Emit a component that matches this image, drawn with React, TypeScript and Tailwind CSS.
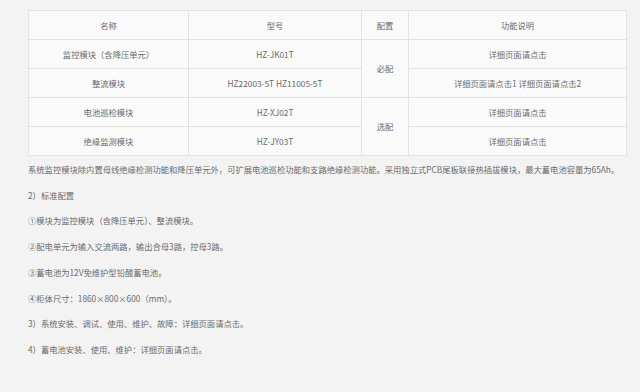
import React from 'react'

const rows = [
  { name: '监控模块（含降压单元）', model: 'HZ-JK01T', desc: '详细页面请点击' },
  { name: '整流模块', model: 'HZ22003-5T HZ11005-5T', desc: '详细页面请点击1 详细页面请点击2' },
  { name: '电池巡检模块', model: 'HZ-XJ02T', desc: '详细页面请点击' },
  { name: '绝缘监测模块', model: 'HZ-JY03T', desc: '详细页面请点击' },
]

const paras = [
  '系统监控模块除内置母线绝缘检测功能和降压单元外，可扩展电池巡检功能和支路绝缘检测功能。采用独立式PCB尾板联接热插拔模块，最大蓄电池容量为65Ah。',
  '2）标准配置',
  '①模块为监控模块（含降压单元）、整流模块。',
  '②配电单元为输入交流两路，输出合母3路，控母3路。',
  '③蓄电池为12V免维护型铅酸蓄电池。',
  '④柜体尺寸：1860×800×600（mm）。',
  '3）系统安装、调试、使用、维护、故障：详细页面请点击。',
  '4）蓄电池安装、使用、维护：详细页面请点击。',
]

const cell = 'border border-[#e3e3e3] text-center align-middle h-[29px] p-0'

export default function App() {
  return (
    <div
      className="w-[640px] h-[392px] bg-[#f3f3f3] pt-[10px] pl-[28px] text-[8.3px] text-[#6b6b6b] overflow-hidden"
      style={{ fontFamily: '"Noto Sans CJK SC", "Noto Sans", sans-serif' }}
    >
      <table className="w-[598px] border-collapse bg-[#fafafa] table-fixed">
        <colgroup>
          <col className="w-[160px]" />
          <col className="w-[173px]" />
          <col className="w-[47px]" />
          <col className="w-[218px]" />
        </colgroup>
        <thead>
          <tr>
            <td className={cell}>名称</td>
            <td className={cell}>型号</td>
            <td className={cell}>配置</td>
            <td className={cell}>功能说明</td>
          </tr>
        </thead>
        <tbody>
          {rows.map((r, i) => (
            <tr key={r.model}>
              <td className={cell}>{r.name}</td>
              <td className={cell}>{r.model}</td>
              {i === 0 && (
                <td className={cell} rowSpan={2}>
                  必配
                </td>
              )}
              {i === 2 && (
                <td className={cell} rowSpan={2}>
                  选配
                </td>
              )}
              <td className={cell}>{r.desc}</td>
            </tr>
          ))}
        </tbody>
      </table>
      <div className="mt-px">
        {paras.map(p => (
          <p key={p} className="leading-[25.7px] whitespace-nowrap">
            {p}
          </p>
        ))}
      </div>
    </div>
  )
}
